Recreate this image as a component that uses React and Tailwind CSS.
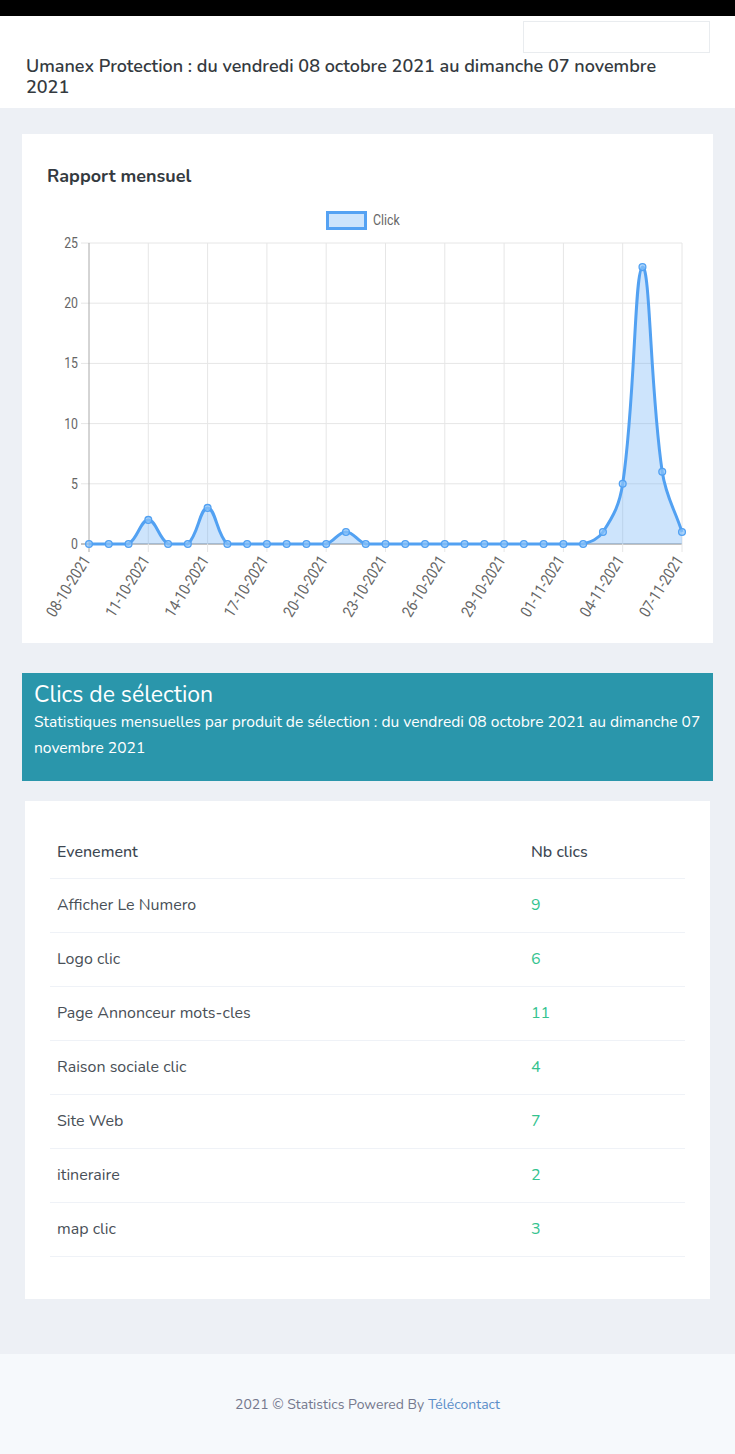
import React from "react";

const data = [0,0,0,2,0,0,3,0,0,0,0,0,0,1,0,0,0,0,0,0,0,0,0,0,0,0,1,5,23,6,1];
const X0 = 89, X1 = 682, Y0 = 544, YT = 243;
const px = (i) => X0 + (i * (X1 - X0)) / 30;
const py = (v) => Y0 - (v * (Y0 - YT)) / 25;

function buildPath() {
  const pts = data.map((v, i) => ({ x: px(i), y: py(v) }));
  const t = 0.4;
  const cps = pts.map((p, i) => {
    const prev = pts[i - 1] || p;
    const next = pts[i + 1] || p;
    const d01 = Math.hypot(p.x - prev.x, p.y - prev.y);
    const d12 = Math.hypot(next.x - p.x, next.y - p.y);
    const s01 = d01 / (d01 + d12 || 1);
    const s12 = d12 / (d01 + d12 || 1);
    const fa = t * s01, fb = t * s12;
    let c1y = p.y - fa * (next.y - prev.y);
    let c2y = p.y + fb * (next.y - prev.y);
    c1y = Math.min(Math.max(c1y, YT), Y0);
    c2y = Math.min(Math.max(c2y, YT), Y0);
    return {
      c1: { x: p.x - fa * (next.x - prev.x), y: c1y },
      c2: { x: p.x + fb * (next.x - prev.x), y: c2y },
    };
  });
  let d = `M${pts[0].x},${pts[0].y}`;
  for (let i = 1; i < pts.length; i++) {
    const a = cps[i - 1].c2, b = cps[i].c1, p = pts[i];
    d += ` C${a.x},${a.y} ${b.x},${b.y} ${p.x},${p.y}`;
  }
  return { d, pts };
}

const labels = ["08-10-2021","11-10-2021","14-10-2021","17-10-2021","20-10-2021","23-10-2021","26-10-2021","29-10-2021","01-11-2021","04-11-2021","07-11-2021"];

function Chart() {
  const { d, pts } = buildPath();
  const fillD = `${d} L${X1},${Y0} L${X0},${Y0} Z`;
  const yTicks = [0, 5, 10, 15, 20, 25];
  return (
    <svg viewBox="37 188 651 445" width="651" height="445" className="block ml-[-10px]">
      <rect x="327.5" y="212.5" width="38" height="16" fill="#cde4fc" stroke="#55a2f3" strokeWidth="3" />
      <text x="373" y="225" fontSize="15" fill="#666" fontFamily="Roboto, sans-serif" transform="translate(373 0) scale(0.82 1) translate(-373 0)">Click</text>
      {yTicks.map((v) => (
        <g key={v}>
          <line x1="81" x2={X1} y1={py(v)} y2={py(v)} stroke={v === 0 ? "#c2c2c2" : "#e6e6e6"} strokeWidth={v === 0 ? 2 : 1} />
          <text x="78" y={py(v) + 5} fontSize="15" fill="#666" textAnchor="end" fontFamily="Roboto, sans-serif" transform="translate(78 0) scale(0.82 1) translate(-78 0)">{v}</text>
        </g>
      ))}
      {labels.map((l, k) => {
        const x = px(k * 3);
        const ax = x + 2;
        const ay = 560;
        return (
          <g key={l}>
            <line x1={x} x2={x} y1={YT} y2="552" stroke={k === 0 ? "#aaa" : "#e6e6e6"} strokeWidth="1" />
            <text
              x={ax}
              y={ay}
              fontSize="16"
              fill="#666"
              textAnchor="end"
              fontFamily="Roboto, sans-serif"
              transform={`rotate(-58 ${ax} ${ay}) translate(${ax} 0) scale(0.85 1) translate(${-ax} 0)`}
            >
              {l}
            </text>
          </g>
        );
      })}
      <path d={fillD} fill="rgba(100,170,245,0.32)" />
      <path d={d} fill="none" stroke="#52a1f2" strokeWidth="3" strokeLinejoin="round" />
      {pts.map((p, i) => (
        <circle key={i} cx={p.x} cy={p.y} r="3.4" fill="rgba(140,195,250,0.7)" stroke="#52a1f2" strokeWidth="1.3" />
      ))}
    </svg>
  );
}

const rows = [
  ["Afficher Le Numero", "9"],
  ["Logo clic", "6"],
  ["Page Annonceur mots-cles", "11"],
  ["Raison sociale clic", "4"],
  ["Site Web", "7"],
  ["itineraire", "2"],
  ["map clic", "3"],
];

export default function App() {
  return (
    <div className="w-[735px] min-h-[1454px] bg-[#edf0f5] flex flex-col" style={{ fontFamily: "Nunito, 'Noto Sans', sans-serif" }}>
      <div className="h-4 bg-black" />
      <div className="bg-white px-[26px] pt-[5px] pb-[10px]">
        <div className="flex justify-end">
          <div className="w-[187px] h-8 border border-[#e9ecef] mr-[-1px]" />
        </div>
        <h1 className="mt-[3px] pr-[20px] text-[18px] leading-[21px] font-semibold text-[#343a40]">
          Umanex Protection : du vendredi 08 octobre 2021 au dimanche 07 novembre 2021
        </h1>
      </div>

      <div className="mx-[22px] mt-[26px] bg-white pt-[30px] px-[25px] pb-[10px]">
        <h2 className="text-[18px] leading-6 font-bold text-[#343a40]">Rapport mensuel</h2>
        <Chart />
      </div>

      <div className="mx-[22px] mt-[30px] bg-[#2a96ab] pl-3 pr-[3px] pt-[8px] pb-[20px] text-white">
        <div className="text-[23px] leading-[28px]">Clics de sélection</div>
        <div className="text-[15.6px] leading-[26px]">
          Statistiques mensuelles par produit de sélection : du vendredi 08 octobre 2021 au dimanche 07 novembre 2021
        </div>
      </div>

      <div className="mx-[25px] mt-5 bg-white px-[25px] pt-[26px] pb-[42px]">
        <table className="w-full border-collapse text-[16px]">
          <thead>
            <tr className="border-b border-[#eff2f7] text-[#3d4752]">
              <th className="h-[51px] w-[474px] px-[7px] text-left font-medium">Evenement</th>
              <th className="h-[51px] px-[7px] text-left font-medium">Nb clics</th>
            </tr>
          </thead>
          <tbody>
            {rows.map(([a, b]) => (
              <tr key={a} className="border-b border-[#eff2f7]">
                <td className="h-[54px] px-[7px] text-[#495057]">{a}</td>
                <td className="h-[54px] px-[7px] text-[#34c38f]">{b}</td>
              </tr>
            ))}
          </tbody>
        </table>
      </div>

      <div className="flex-1 min-h-[55px]" />
      <div className="h-[101px] bg-[#f6f9fc] flex items-center justify-center text-[14px] text-[#74788d]">
        <span>
          2021 © Statistics Powered By <span className="text-[#5b8ec8]">Télécontact</span>
        </span>
      </div>
    </div>
  );
}
